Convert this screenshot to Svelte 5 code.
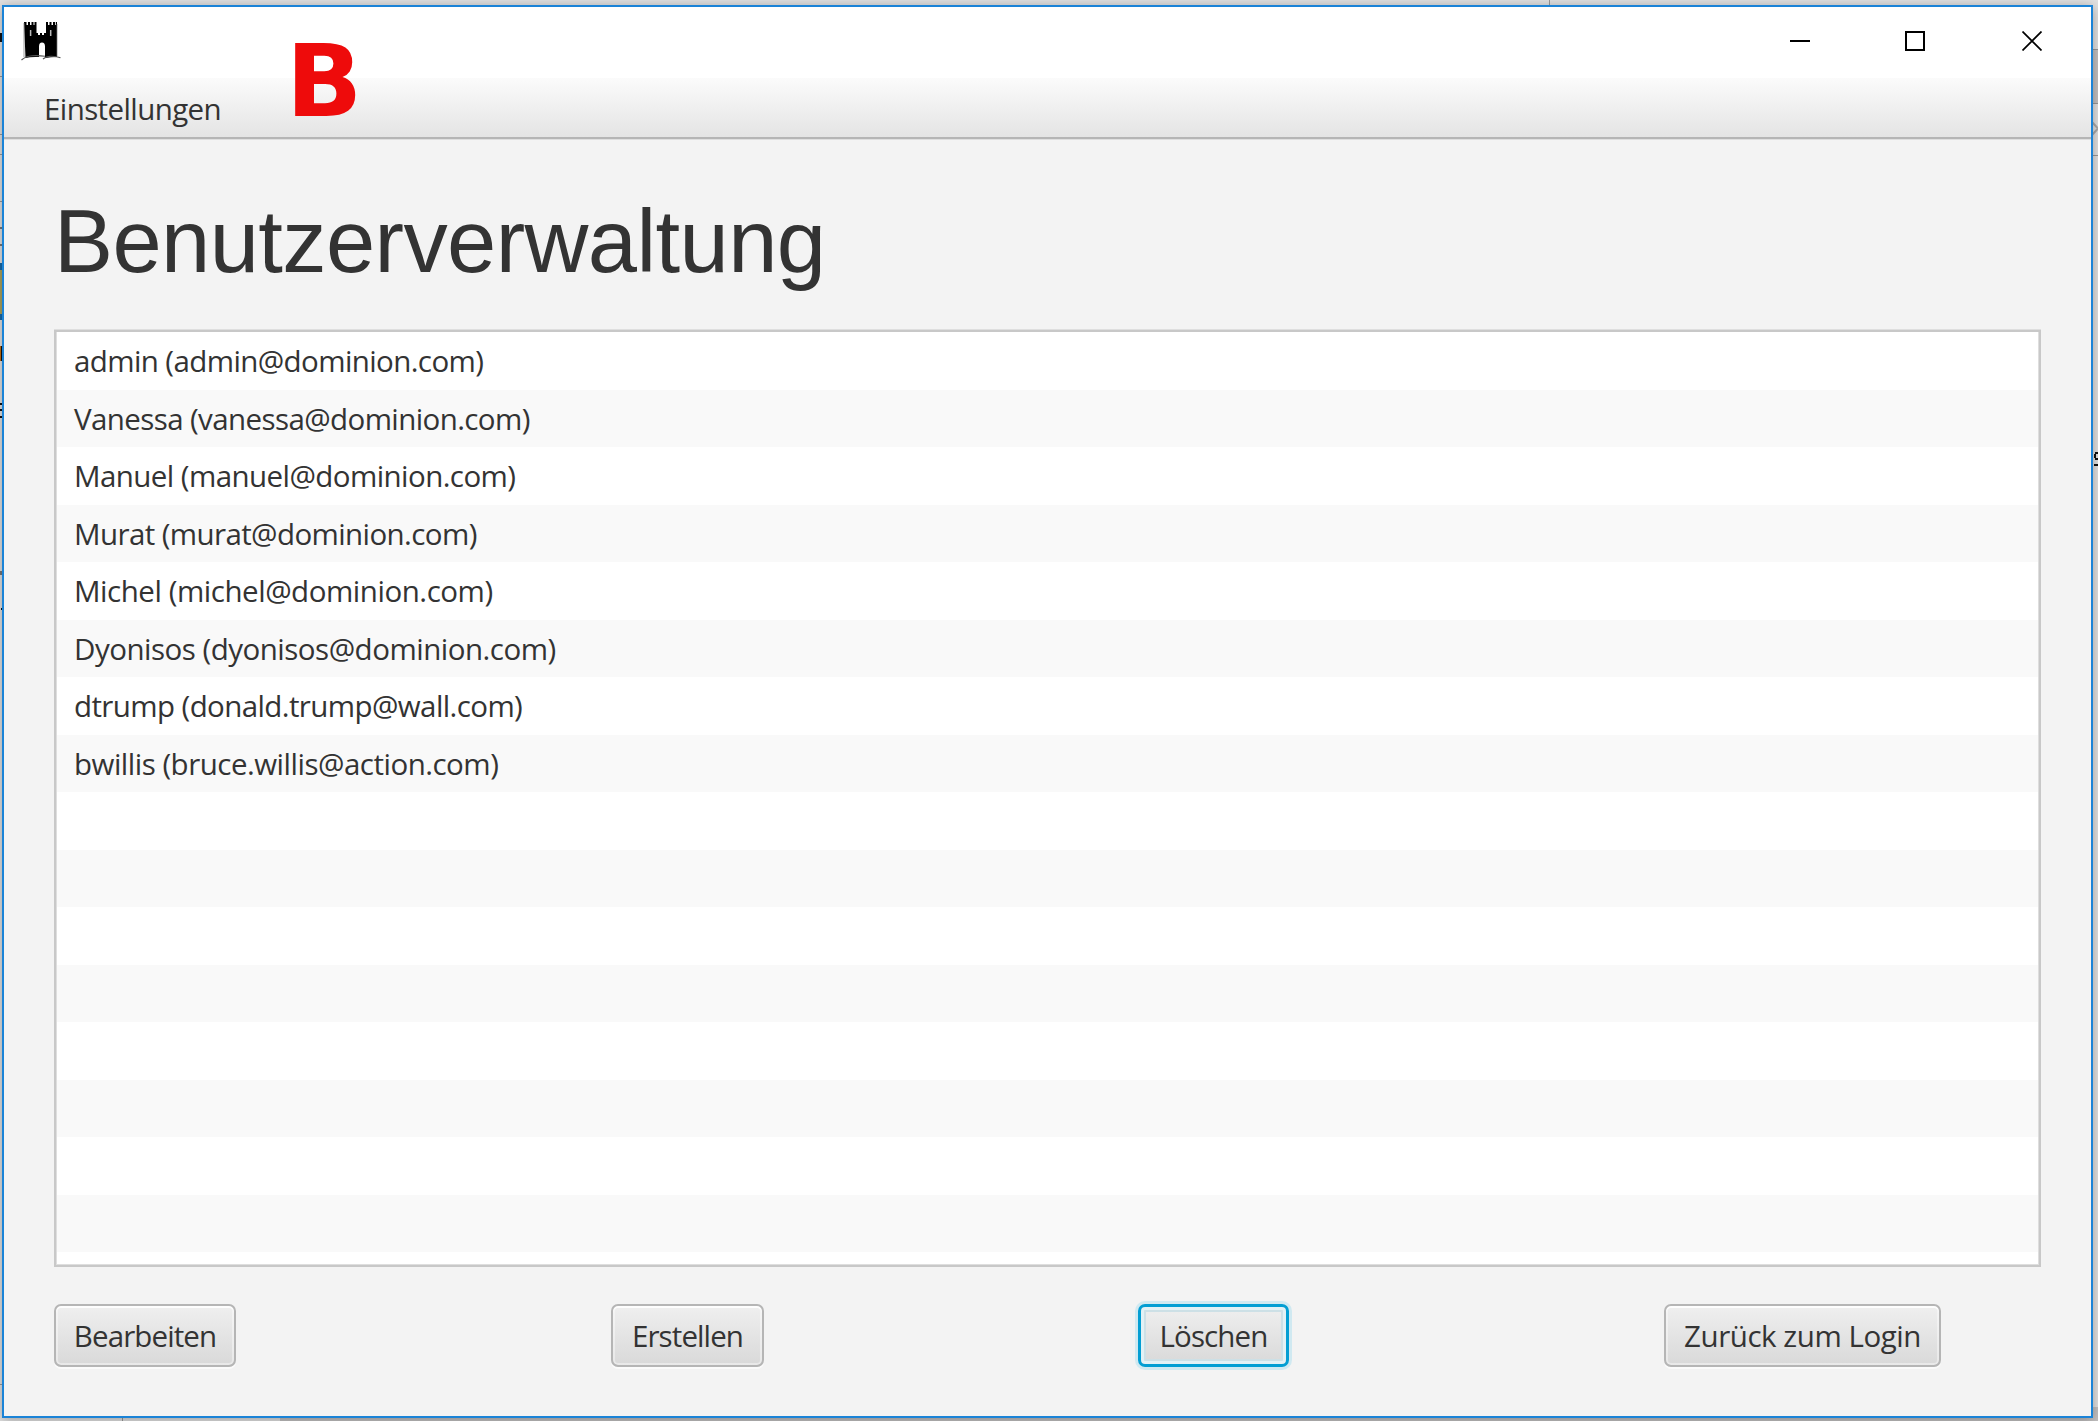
<script>
  const users = [
    { label: 'admin (admin@dominion.com)', tracking: -0.6 },
    { label: 'Vanessa (vanessa@dominion.com)', tracking: -0.6 },
    { label: 'Manuel (manuel@dominion.com)', tracking: -0.57 },
    { label: 'Murat (murat@dominion.com)', tracking: -0.6 },
    { label: 'Michel (michel@dominion.com)', tracking: -0.46 },
    { label: 'Dyonisos (dyonisos@dominion.com)', tracking: -0.5 },
    { label: 'dtrump (donald.trump@wall.com)', tracking: -0.6 },
    { label: 'bwillis (bruce.willis@action.com)', tracking: -0.5 },
  ];
  const rows = [...users, ...Array(9).fill({ label: '', tracking: 0 })];
</script>

<div class="desktop">
  <svg class="behind" width="2098" height="1421" shape-rendering="crispEdges">
    <path d="M0 76H2M0 134H2M0 154H2M0 201H2M0 1384H2M2093 49H2098M2093 103H2098M2093 155H2098M122.5 1418V1421M1549.5 0V5" stroke="#999" stroke-width="1" />
    <path d="M2093 50h5v53h-5zM2093 1407h5v14h-5zM280 1418h1818v3H280z" fill="#c4c2c2" />
    <path d="M0 263h2v57H0z" fill="#1769a8" />
    <path d="M0 270h2v44H0z" fill="#aca35c" />
    <path d="M0 33h2v9H0zM1 346h1v15h-1zM0 403h2v2H0zM0 409h2v2H0zM0 416h2v2H0zM1 608h1v2h-1zM2095 452h3v2h-3zM2094 454h2v4h-2zM2095 458h3v2h-3zM2094 464h4v2h-4z" fill="#111" />
    <path d="M0 346h1v15H0z" fill="#c46f12" />
    <path d="M0 227h2v2H0zM0 244h2v2H0zM0 571h2v4H0z" fill="#777" />
    <path d="M2092 122l6 6.500l-6 6.500" fill="none" stroke="#aaa" stroke-width="2" shape-rendering="auto" />
  </svg>
  <div class="window">
    <header class="titlebar">
      <svg class="logo" width="40" height="40" viewBox="0 0 40 40">
        <path d="M3 1h2.500v3h1.500v-3h2v3h1.500v-3h2v3h1v-3h2v11h1.500v2h2v-2h2v2h2v-2h2v-11h2v3h1.500v-3h2v3h1.500v-3h2v3h.8v-3h1.200v35q-6 0-12 1v-11.500q0-4-3-4t-3 4v10.500q-8-.5-13.500 1z" />
        <path d="M.5 39q4-4 11-4.300t12.500.6M22 38q3-3 8.500-2.800t9 1.600" fill="none" stroke="#555" stroke-width="1.100" />
        <path d="M9.600 9v6M29.700 9v6" stroke="#bbb" stroke-width="1.500" />
        <path d="M3 2v34M36 3v32" stroke="#777" stroke-width=".7" />
      </svg>
      <div class="controls">
        <svg width="20" height="20" viewBox="0 0 20 20"><path d="M0 10H20" /></svg>
        <svg width="20" height="20" viewBox="0 0 20 20"><path d="M1 1H19V19H1Z" /></svg>
        <svg width="20" height="20" viewBox="0 0 20 20"><path d="M.5 .5L19.500 19.500M19.500 .5L.5 19.500" stroke-width="1.700" /></svg>
      </div>
    </header>
    <nav class="menubar"><span>Einstellungen</span></nav>
    <main>
      <h1>Benutzerverwaltung</h1>
      <ul>
        {#each rows as row}
          <li style:letter-spacing="{row.tracking}px">{row.label}</li>
        {/each}
      </ul>
      <div class="actions">
        <button class="edit">Bearbeiten</button>
        <button class="create">Erstellen</button>
        <button class="delete focused">Löschen</button>
        <button class="back">Zurück zum Login</button>
      </div>
    </main>
  </div>
  <div class="marker">B</div>
</div>

<style>
  :global(body) { margin: 0; overflow: hidden; }
  .desktop {
    position: relative;
    box-sizing: border-box;
    width: 2098px;
    height: 1421px;
    padding: 5px 5px 3px 2px;
    overflow: hidden;
    background: #e2e2e2;
    font-family: 'Open Sans', 'Noto Sans', sans-serif;
    color: #333;
  }
  .behind { position: absolute; left: 0; top: 0; }
  .window {
    position: relative;
    box-sizing: border-box;
    height: 1413px;
    border: 2px solid #1a83d7;
    background: #f3f3f3;
    box-shadow: 0 2px 12px rgba(0, 0, 0, .32);
    display: flex;
    flex-direction: column;
  }
  .titlebar {
    height: 71px;
    background: #fff;
    display: flex;
    justify-content: space-between;
  }
  .logo { margin: 14px 0 0 17px; }
  .controls { display: flex; gap: 95px; padding: 24px 49px 0 0; }
  .controls svg { fill: none; stroke: #000; stroke-width: 2; }
  .controls svg:nth-child(2) { margin-right: 2px; }
  .menubar {
    box-sizing: border-box;
    height: 62px;
    padding-left: 40px;
    border-bottom: 1px solid #dfdfdf;
    background: linear-gradient(#fbfbfb, #e4e4e4 59px, #b5b5b5 59px);
    font-size: 29.500px;
    line-height: 62px;
    letter-spacing: -.6px;
  }
  main { flex: 1; padding: 0 50px; }
  h1 {
    margin: 52px 0 0;
    height: 138px;
    font: 400 88.500px/100px 'Liberation Sans', Arial, sans-serif;
    letter-spacing: -.6px;
  }
  ul {
    box-sizing: border-box;
    height: 937px;
    margin: 0;
    padding: 0 1px;
    border: 2px solid #c8c8c8;
    box-shadow: 0 -1px 0 #dedede, inset 0 0 0 1px #dedede;
    list-style: none;
    overflow: hidden;
    background: #fff;
  }
  li {
    height: 57.500px;
    padding-left: 17px;
    font-size: 29.500px;
    line-height: 57.500px;
    white-space: nowrap;
  }
  li:nth-child(odd) { background: #fff; }
  li:nth-child(even) { background: #f9f9f9; }
  li:last-child { height: 12px; }
  .actions {
    display: grid;
    grid-template-columns: 557px 527px 526px auto;
    margin-top: 37px;
    justify-items: start;
  }
  button {
    box-sizing: border-box;
    height: 63px;
    padding: 0;
    border: 2px solid #b5b5b5;
    border-radius: 7px;
    background: linear-gradient(#efefef, #d9d9d9);
    box-shadow: inset 0 0 0 2px rgba(255, 255, 255, .4), inset 0 2px 0 rgba(255, 255, 255, .8), 0 2px 0 #fbfbfb;
    font: inherit;
    font-size: 29.500px;
    line-height: 57px;
    letter-spacing: -.9px;
    color: #333;
    white-space: nowrap;
  }
  .edit { width: 182px; }
  .create { width: 153px; }
  .delete { width: 151px; }
  .back { width: 277px; letter-spacing: -.45px; }
  .focused {
    border: 3px solid #039ed3;
    line-height: 55px;
    box-shadow: inset 0 0 0 3px #e3f1f5, inset 0 0 0 5px #cde0e6, 0 0 0 3px #d0e9f1;
  }
  .marker {
    position: absolute;
    left: 286px;
    top: 12px;
    font: 700 100px/140px 'DejaVu Sans', sans-serif;
    color: #ee0b0b;
  }
</style>
